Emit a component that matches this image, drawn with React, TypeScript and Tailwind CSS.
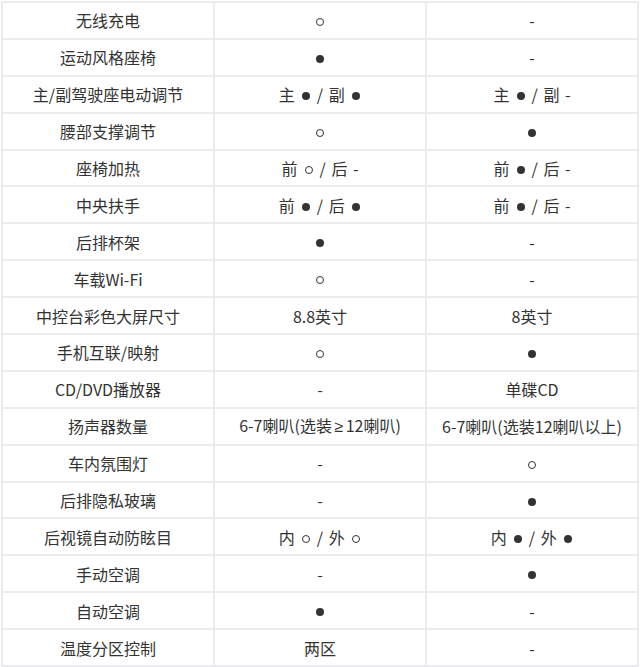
import React from "react";

const rows: [string, string, string][] = [
  ["无线充电", "○", "-"],
  ["运动风格座椅", "●", "-"],
  ["主/副驾驶座电动调节", "主 ● / 副 ●", "主 ● / 副 -"],
  ["腰部支撑调节", "○", "●"],
  ["座椅加热", "前 ○ / 后 -", "前 ● / 后 -"],
  ["中央扶手", "前 ● / 后 ●", "前 ● / 后 -"],
  ["后排杯架", "●", "-"],
  ["车载Wi-Fi", "○", "-"],
  ["中控台彩色大屏尺寸", "8.8英寸", "8英寸"],
  ["手机互联/映射", "○", "●"],
  ["CD/DVD播放器", "-", "单碟CD"],
  ["扬声器数量", "6-7喇叭(选装≥12喇叭)", "6-7喇叭(选装12喇叭以上)"],
  ["车内氛围灯", "-", "○"],
  ["后排隐私玻璃", "-", "●"],
  ["后视镜自动防眩目", "内 ○ / 外 ○", "内 ● / 外 ●"],
  ["手动空调", "-", "●"],
  ["自动空调", "●", "-"],
  ["温度分区控制", "两区", "-"],
];

function Cell({ text }: { text: string }) {
  const parts = text.split(/([●○≥])/);
  return (
    <>
      {parts.map((p, i) =>
        p === "●" ? (
          <span key={i} className="inline-block w-[8px] h-[8px] rounded-full bg-[#333] align-middle mx-[1.5px] relative top-[-1px]" aria-label="●" />
        ) : p === "○" ? (
          <span key={i} className="inline-block w-[8px] h-[8px] rounded-full border border-[#333] align-middle mx-[1.5px] relative top-[-1px]" aria-label="○" />
        ) : p === "≥" ? (
          <span key={i} className="px-[2.5px]" style={{ fontFamily: '"Liberation Sans", sans-serif' }}>≥</span>
        ) : (
          <span key={i}>{p}</span>
        )
      )}
    </>
  );
}

export default function App() {
  return (
    <div className="bg-white w-[640px] h-[667px] pt-px pl-px">
      <table
        className="w-[638px] border-collapse table-fixed text-[16px] text-[#333] [word-spacing:2px]"
        style={{ fontFamily: '"Microsoft YaHei", "Noto Sans CJK SC", sans-serif' }}
      >
        <tbody>
          {rows.map((r, i) => (
            <tr key={i} className="h-[36.9px]">
              {r.map((c, j) => (
                <td key={j} className="border-2 border-[#ebebf0] text-center align-middle p-0 leading-none whitespace-nowrap">
                  <Cell text={c} />
                </td>
              ))}
            </tr>
          ))}
        </tbody>
      </table>
    </div>
  );
}
